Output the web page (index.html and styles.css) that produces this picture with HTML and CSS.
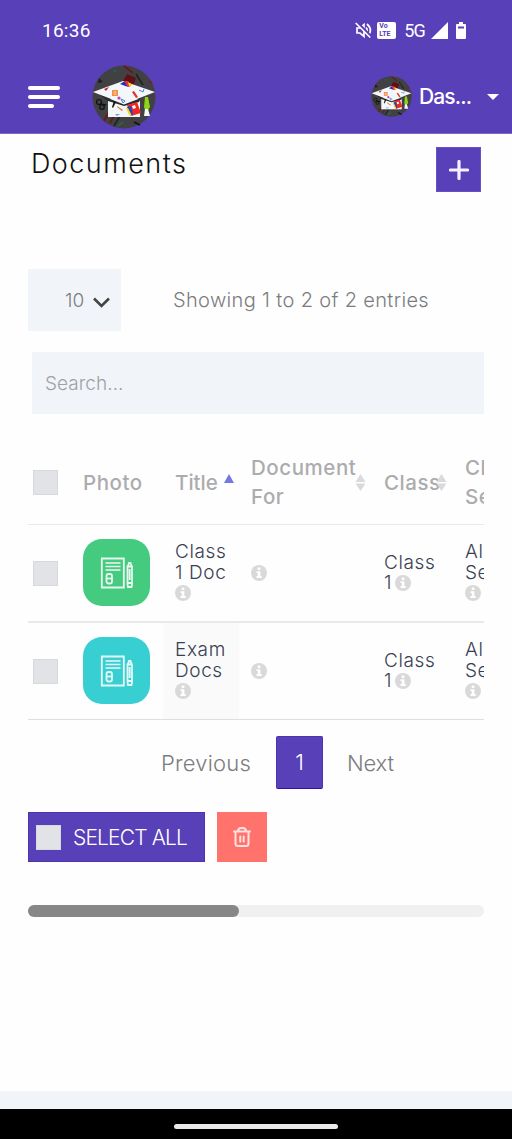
FILE: index.html
```html
<!DOCTYPE html>
<html lang="en">
<head>
<meta charset="utf-8">
<title>Documents</title>
<link rel="stylesheet" href="styles.css">
</head>
<body>
<svg class="defs" width="0" height="0">
  <symbol id="logo" viewBox="0 0 64 64">
    <circle cx="32" cy="32" r="31.5" fill="#414042"/>
    <g fill="none" stroke-width="1.6">
      <path d="M32 1l9 7M18 45l-6 11M23 49l-5 9" stroke="#6b1717"/>
      <path d="M44 9l7 11M28 51l-6 10" stroke="#222"/>
      <path d="M31 57l-5 4" stroke="#28694f"/>
      <circle cx="7" cy="37" r="2.5" stroke="#111" stroke-width="1.2"/>
      <circle cx="10" cy="42" r="2.3" stroke="#111" stroke-width="1.2"/>
      <path d="M8 39l6 1M42 57l6 3" stroke="#111"/>
      <path d="M57 16l3 2" stroke="#752323"/>
    </g>
    <path d="M35 9l9 4-3 9-11-4z" fill="#5e1014"/>
    <path d="M7 13l4 4-5 1z" fill="#1d1d1d"/><circle cx="23" cy="6" r="1.6" fill="#1f6250"/>
    <path d="M16 34h32v18H16z" fill="#f3f7fa"/>
    <path d="M1 27L31 16l32 11-31 12z" fill="#f3f7fa"/>
    <path d="M8 30l24 9.500 17-6.500-2 4-15 4-16-5z" fill="#292b2d"/>
    <path d="M28 19l5-3 3 6z" fill="#172fd1"/><path d="M32 16l4 0 3 5-3 1z" fill="#f02c28"/><path d="M36 17l5 3-4 1z" fill="#ffd81b"/>
    <path d="M20 25h6v6h-6z" fill="#f58d42"/><path d="M21.500 27h3M21.500 29h3" stroke="#fff" stroke-width=".7"/>
    <path d="M40 27l4 6 2-1-4-6z" fill="#e83030"/><path d="M12 24l5-2-3 4z" fill="#c91d32"/>
    <path d="M47 25l4 2 1-3M29 34l4 2-2 2z" fill="none" stroke="#3b83d3"/>
    <circle cx="27" cy="33" r="1.600" fill="#d13ca0"/>
    <path d="M35 40l10-3 4 11-10 3z" fill="#f22626"/><path d="M35 42l4-1 2 9-2 1z" fill="#1748bd"/><path d="M34 43l2 0 4 8-3-1z" fill="#ffd41b"/><path d="M40 41l3-1 1 3-3 1z" fill="#fff"/>
    <path d="M25 41l6 4-1 1-5-4z" fill="#ee6c28"/><path d="M20 42l2-6 2 1-3 6z" fill="#111"/><path d="M23 49l5 0-3 2z" fill="#5aa7df"/>
    <path d="M53 32h3l2 10-2 3h-3l-1-3z" fill="#8ed316"/><path d="M53 44h3l2 7h-6z" fill="#f4f7f3"/>
  </symbol>
  <symbol id="info" viewBox="0 0 16 16">
    <circle cx="8" cy="8" r="8" fill="#d9d9d9"/>
    <path d="M6.700 2.600h2.700v2.400H6.700zM5.500 6.200h3.900v4.700h1.300v2H5.500v-2h1.300V8.100H5.500z" fill="#fff"/>
  </symbol>
  <symbol id="paper" viewBox="0 0 34 34">
    <g fill="none" stroke="#fff" stroke-width="1.800" opacity=".88">
      <path d="M1.800 2.500h22v29h-22z"/>
      <path d="M5.500 7h15M5.500 10.500h15M5.500 14h15" stroke-width="1.400"/>
      <rect x="6.500" y="18" width="5.500" height="9.500" rx="2"/><path d="M7 22.500h5"/>
      <path d="M27.500 10.500h4.500v18l-.5 2.500h-3.500l-.5-2.500zM28 10l1-3h1.500l1 3M27.500 27h4.500M29.700 13v11"/>
    </g>
  </symbol>
  <symbol id="sort" viewBox="0 0 11 17"><path d="M5.500 0l5 8H.5zM.5 9.500h10l-5 7.500z" fill="#dadadc"/></symbol>
</svg>

<header class="top">
  <div class="status">
    <span class="clock">16:36</span>
    <div class="signals">
      <svg width="17" height="17" viewBox="0 0 17 17" fill="none" stroke="#fff" stroke-width="1.700"><path d="M2 6h3l4-3.500v12L5 11H2zM11 5.500q2.500 3 0 6M12 2q6 5.500 1.500 11"/><path d="M1.500 0l15 15" stroke="#5840b8" stroke-width="3"/><path d="M.7 1l14.500 14.500"/></svg>
      <span class="volte"><span>Vo</span><span>LTE</span></span>
      <span class="net">5G</span>
      <svg class="bars" width="17" height="17" viewBox="0 0 17 17"><path d="M17 0v17H0z" fill="#fff"/></svg>
      <svg class="battery" width="10" height="17" viewBox="0 0 10 17"><path d="M3 0h4v2H9q1 0 1 1v13q0 1-1 1H1q-1 0-1-1V3q0-1 1-1h2z" fill="#fff"/><path d="M2 4.500h6v2H2z" fill="#5840b8"/></svg>
    </div>
  </div>
  <nav class="nav">
    <button class="menu" aria-label="Menu"><span></span><span></span><span></span></button>
    <svg class="brand" width="64" height="64"><use href="#logo"/></svg>
    <div class="account">
      <svg width="41" height="41"><use href="#logo"/></svg>
      <span class="name">Das...</span>
      <svg class="caret" width="12" height="6" viewBox="0 0 12 6"><path d="M0 0h12L6 6z" fill="#fff"/></svg>
    </div>
  </nav>
</header>

<main>
  <div class="heading">
    <h1>Documents</h1>
    <button class="add" aria-label="Add"><svg width="20" height="20" viewBox="0 0 20 20"><path d="M10 1.500v17M1.500 10h17" stroke="#f5f2ff" stroke-width="3.200" stroke-linecap="round"/></svg></button>
  </div>
  <div class="controls">
    <div class="length"><span>10</span><svg width="17" height="11" viewBox="0 0 17 11"><path d="M1 1.500l7.500 7.500L16 1.500" fill="none" stroke="#444" stroke-width="2.600"/></svg></div>
    <span class="showing">Showing 1 to 2 of 2 entries</span>
  </div>
  <div class="search">Search...</div>

  <div class="scroller">
    <div class="row head">
      <div><i class="box"></i></div>
      <div><span>Photo</span></div>
      <div class="sorted"><span class="t-title">Title</span><svg width="10" height="9" viewBox="0 0 10 9"><path d="M5 0l5 9H0z" fill="#7479df"/></svg></div>
      <div class="sortable"><span>Document<br>For</span><svg class="sort" width="11" height="17"><use href="#sort"/></svg></div>
      <div class="sortable"><span>Class</span><svg class="sort" width="11" height="17"><use href="#sort"/></svg></div>
      <div><span>Class<br>Section</span></div>
    </div>
    <div class="row">
      <div><i class="box"></i></div>
      <div><span class="tile green"><svg width="34" height="34"><use href="#paper"/></svg></span></div>
      <div><p>Class<br>1 Doc<br><svg class="info"><use href="#info"/></svg></p></div>
      <div><p><svg class="info"><use href="#info"/></svg></p></div>
      <div><p>Class<br><span class="one">1</span><svg class="info"><use href="#info"/></svg></p></div>
      <div><p>All<br>Sections<br><svg class="info"><use href="#info"/></svg></p></div>
    </div>
    <div class="row last">
      <div><i class="box"></i></div>
      <div><span class="tile teal"><svg width="34" height="34"><use href="#paper"/></svg></span></div>
      <div class="shade"><p>Exam<br>Docs<br><svg class="info"><use href="#info"/></svg></p></div>
      <div><p><svg class="info"><use href="#info"/></svg></p></div>
      <div><p>Class<br><span class="one">1</span><svg class="info"><use href="#info"/></svg></p></div>
      <div><p>All<br>Sections<br><svg class="info"><use href="#info"/></svg></p></div>
    </div>
  </div>

  <div class="pager"><span class="prev">Previous</span><span class="page">1</span><span class="next">Next</span></div>
  <div class="actions">
    <button class="all"><i class="box"></i><span>SELECT ALL</span></button>
    <button class="delete" aria-label="Delete"><svg width="18" height="20" viewBox="0 0 18 20" fill="none" stroke="#ffe1df" stroke-width="2" stroke-linecap="round" stroke-linejoin="round"><path d="M1 4.500h16M5 4.500q0-3.500 3-3.500h2q3 0 3 3.500M2.500 5v11.500q0 2.500 2.500 2.500h8q2.500 0 2.500-2.500V5M7.300 9.500v5M10.700 9.500v5"/></svg></button>
  </div>
  <div class="track"><div class="thumb"></div></div>
</main>
<div class="strip"></div>
<footer class="gesture"><span></span></footer>
</body>
</html>
```

FILE: styles.css
```css
* { box-sizing: border-box; }
body {
  margin: 0;
  width: 512px;
  height: 1139px;
  display: flex;
  flex-direction: column;
  overflow: hidden;
  background: #fefefe;
  font-family: Inter, "Open Sans", sans-serif;
  font-weight: 350;
  color: #7c7c80;
}
.defs { position: absolute; }
svg { display: block; flex: none; }
button { border: 0; padding: 0; font: inherit; border-radius: 0; }
h1, p { margin: 0; font-weight: inherit; }

.top { height: 134px; background: #5840b8; color: #fff; flex: none; border-bottom: 1px solid #7d6cc6; }
.status { height: 60px; padding: 1px 46px 0 42px; display: flex; align-items: center; justify-content: space-between; font-family: Roboto, sans-serif; }
.clock { font-size: 19px; font-weight: 450; letter-spacing: .25px; }
.signals { display: flex; align-items: center; }
.volte { width: 19px; height: 17px; margin: 0 8px 0 5px; padding: 1px 2px; border-radius: 2px; background: #fff; color: #5840b8; display: flex; flex-direction: column; font-size: 7px; line-height: 7.5px; font-weight: 700; }
.net { font-size: 18px; font-weight: 450; letter-spacing: -.8px; margin-right: 6px; }
.battery { margin-left: 8px; }
.nav { height: 73px; display: flex; align-items: center; padding: 0 13px 0 28px; }
.menu { width: 32px; display: flex; flex-direction: column; gap: 5px; background: none; }
.menu span { height: 4px; border-radius: 2px; background: #fff; }
.menu span:last-child { width: 26px; }
.brand { margin-left: 32px; }
.account { margin-left: auto; display: flex; align-items: center; }
.name { margin-left: 7px; width: 68px; font-size: 21px; font-weight: 450; letter-spacing: -.9px; }

main { height: 957px; padding: 0 28px; flex: none; }
.heading { height: 135px; padding: 13px 3px 0 3px; display: flex; justify-content: space-between; }
h1 { font-size: 27px; line-height: 34px; letter-spacing: 1.450px; color: #111; }
.add { width: 45px; height: 45px; display: grid; place-items: center; background: #5840b8; border: 1px solid #6a50c6; }
.controls { height: 62px; display: flex; align-items: center; font-size: 20px; }
.length { width: 93px; height: 62px; padding-left: 37px; background: #f1f5fa; display: flex; align-items: center; gap: 9px; font-size: 19px; }
.length svg { margin-top: 5px; }
.showing { margin-left: 52px; letter-spacing: .35px; }
.search { height: 62px; margin: 21px 0 0 4px; padding-left: 13px; background: #f1f5fa; color: #a1a1a4; font-size: 19px; line-height: 64px; letter-spacing: .05px; }

.scroller { margin-top: 26px; height: 280px; overflow: hidden; }
.row { display: grid; grid-template-columns: 43px 92px 76px 133px 81px 120px; width: 545px; height: 98px; border-bottom: 2px solid #e9e9e9; color: #394052; font-size: 19px; line-height: 20.500px; letter-spacing: .6px; }
.row > div { padding-left: 12px; display: flex; align-items: center; }
.row > div:first-child { padding-left: 5px; }
.row .tile { margin-top: -1px; }
.last { height: 97px; border-bottom-width: 1px; border-bottom-color: #dfdfdf; }
.head { height: 85px; border-bottom-width: 1px; color: #acacae; font-size: 20.500px; line-height: 29px; font-weight: 450; letter-spacing: .55px; }
.t-title { letter-spacing: 0; }
.shade { background: #fafafa; }
.box { width: 25px; height: 25px; background: #e1e3e6; border: 1px solid #d8d9db; flex: none; }
.sorted svg { margin: -8px 0 0 6px; }
.sortable { position: relative; }
.sort { position: absolute; right: 6px; top: 34px; }
.tile { width: 67px; height: 67px; border-radius: 19px; display: grid; place-items: center; }
.green { background: #45cb80; }
.teal { background: #38cfd2; }
.info { width: 16px; height: 16px; display: inline-block; vertical-align: -2px; }
.one { margin-right: 3px; }

.pager { display: flex; align-items: center; height: 53px; margin-top: 16px; padding-left: 133px; font-size: 22px; }
.prev { width: 115px; letter-spacing: .2px; }
.page { width: 47px; height: 53px; background: #5840b8; border: 1px solid #4d32b4; border-bottom-color: #3b0ca8; border-radius: 2px; color: #fff; text-align: center; line-height: 51px; }
.next { margin-left: 24px; letter-spacing: -.2px; }
.actions { display: flex; gap: 12px; margin-top: 23px; height: 50px; }
.all { width: 177px; background: #5840b8; border: 1px solid #4d32b4; color: #fff; display: flex; align-items: center; padding-left: 7px; gap: 12px; font-size: 21px; letter-spacing: -.85px; }
.delete { width: 50px; background: #ff736c; display: grid; place-items: center; }
.track { margin-top: 43px; height: 12px; border-radius: 6px; background: #f0f0f0; }
.thumb { width: 211px; height: 12px; border-radius: 6px; background: #878787; }
.strip { height: 18px; background: #f1f5fa; flex: none; }
.gesture { flex: 1; background: #000; display: flex; justify-content: center; padding-top: 15px; }
.gesture span { width: 164px; height: 5px; border-radius: 3px; background: #ebebeb; }
```
